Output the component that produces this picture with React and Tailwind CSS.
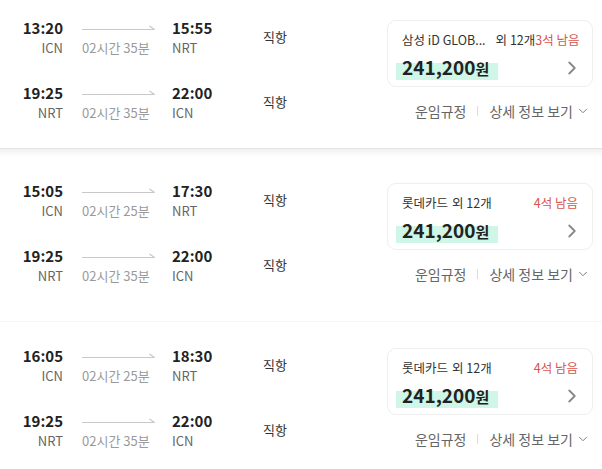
import { ChevronRight, ChevronDown } from "lucide-react";

const FLIGHTS = [
  {
    legs: [
      { dep: "13:20", from: "ICN", dur: "02시간 35분", arr: "15:55", to: "NRT" },
      { dep: "19:25", from: "NRT", dur: "02시간 35분", arr: "22:00", to: "ICN" },
    ],
    card: "삼성 iD GLOB...",
    more: "외 12개",
    seats: "3석 남음",
    price: "241,200",
  },
  {
    legs: [
      { dep: "15:05", from: "ICN", dur: "02시간 25분", arr: "17:30", to: "NRT" },
      { dep: "19:25", from: "NRT", dur: "02시간 35분", arr: "22:00", to: "ICN" },
    ],
    card: "롯데카드",
    more: "외 12개",
    seats: "4석 남음",
    price: "241,200",
  },
  {
    legs: [
      { dep: "16:05", from: "ICN", dur: "02시간 25분", arr: "18:30", to: "NRT" },
      { dep: "19:25", from: "NRT", dur: "02시간 35분", arr: "22:00", to: "ICN" },
    ],
    card: "롯데카드",
    more: "외 12개",
    seats: "4석 남음",
    price: "241,200",
  },
];

function Arrow() {
  return (
    <svg width="73" height="8" viewBox="0 0 73 8" className="block">
      <line x1="0" y1="5.5" x2="72.5" y2="5.5" stroke="#c8c8c8" strokeWidth="1.2" />
      <line x1="72.5" y1="5.5" x2="67.5" y2="2" stroke="#c8c8c8" strokeWidth="1.2" />
    </svg>
  );
}

function Leg({ leg }) {
  return (
    <div className="flex items-center">
      <div className="flex">
        <div className="w-[39px] flex flex-col items-end">
          <span className="text-[15px] leading-[20px] font-bold text-[#222]">{leg.dep}</span>
          <span className="text-[13px] leading-[19px] text-[#666]">{leg.from}</span>
        </div>
        <div className="ml-[19px] w-[73px] flex flex-col">
          <div className="h-[20px] flex items-center">
            <Arrow />
          </div>
          <span className="text-[13px] leading-[19px] text-[#9a9a9a] whitespace-nowrap">{leg.dur}</span>
        </div>
        <div className="ml-[17px] w-[91px] flex flex-col">
          <span className="text-[15px] leading-[20px] font-bold text-[#222]">{leg.arr}</span>
          <span className="text-[13px] leading-[19px] text-[#666]">{leg.to}</span>
        </div>
      </div>
      <span className="text-[13px] leading-[20px] text-[#333] mt-[-1px]">직항</span>
    </div>
  );
}

function Section({ f, first }) {
  return (
    <section
      className={
        first
          ? "flex justify-between pl-6 pr-[9px] pt-[18px] pb-[26px] border-b border-[#e4e4e4]"
          : "flex justify-between pl-6 pr-[9px] pt-6 pb-9 border-b border-[#f6f6f6]"
      }
    >
      <div className="flex flex-col gap-[26px]">
        {f.legs.map((leg, i) => (
          <Leg key={i} leg={leg} />
        ))}
      </div>
      <div className="w-[206px] flex flex-col">
        <div className="mt-[2px] h-[67px] rounded-[9px] border border-[#eeeeee] pl-[14px] pr-[14px] pt-[10px] flex flex-col">
          <div className="flex justify-between text-[12.5px] leading-[18px] whitespace-nowrap">
            <span className="text-[#333]">
              {f.card}
              <span className={first ? "ml-[10px]" : "ml-[4px]"}>{f.more}</span>
            </span>
            <span className="text-[#d9534f]">{f.seats}</span>
          </div>
          <div className="mt-[6px] flex items-center justify-between">
            <span className="relative inline-flex items-baseline">
              <span className="absolute left-[-6px] right-[-9px] top-[8px] bottom-[1px] bg-[#cff6e6]" />
              <span className="relative text-[19px] leading-[24px] font-bold text-[#222]">{f.price}</span>
              <span className="relative text-[15px] leading-[24px] font-bold text-[#222]">원</span>
            </span>
            <ChevronRight size={22} strokeWidth={2} color="#888888" className="mr-[-5px]" />
          </div>
        </div>
        <div className="mt-[14px] h-[20px] flex items-center justify-end pr-[3px] text-[14px] text-[#666]">
          <span>운임규정</span>
          <span className="mx-[11px] w-px h-[10px] bg-[#dddddd]" />
          <span>상세 정보 보기</span>
          <ChevronDown size={14} strokeWidth={1.6} color="#777" className="ml-[3px]" />
        </div>
      </div>
    </section>
  );
}

export default function App() {
  return (
    <div
      className="w-[602px] h-[469px] overflow-hidden bg-white"
      style={{ fontFamily: '"Noto Sans CJK KR", "Noto Sans", sans-serif' }}
    >
      <Section f={FLIGHTS[0]} first />
      <div className="h-[8px] bg-gradient-to-b from-[#f1f1f1] to-white" />
      <Section f={FLIGHTS[1]} />
      <Section f={FLIGHTS[2]} />
    </div>
  );
}
